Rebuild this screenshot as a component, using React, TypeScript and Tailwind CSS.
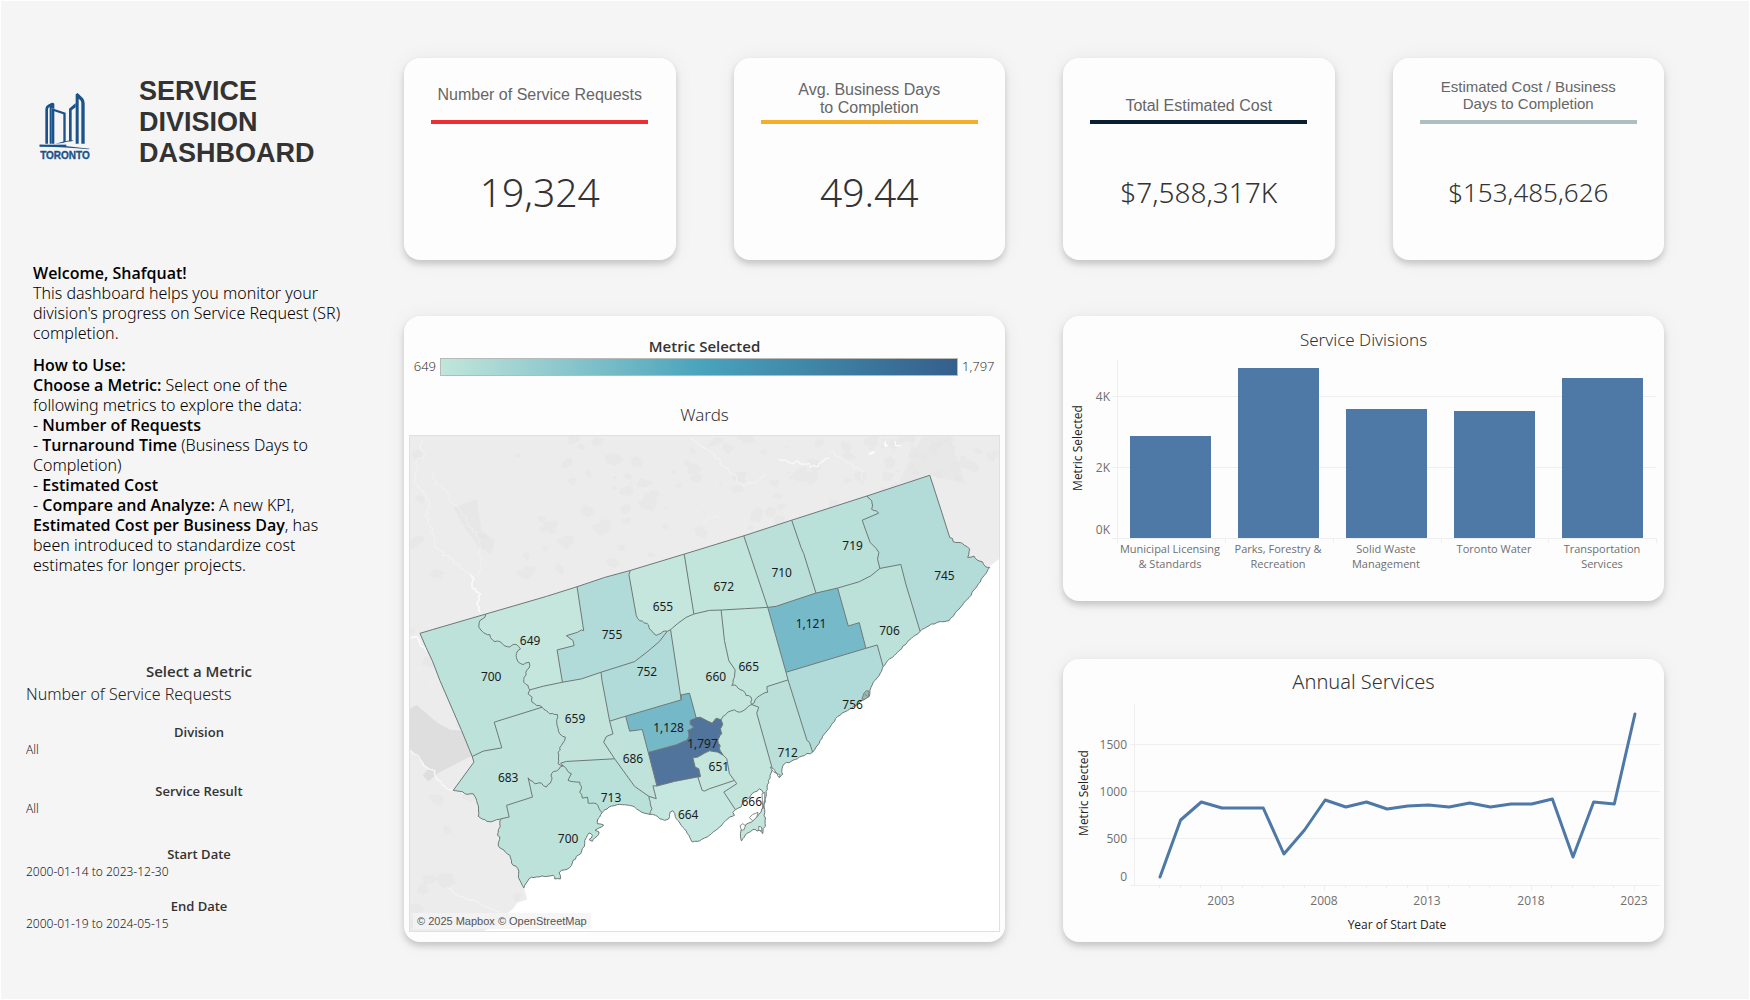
import React from "react";

type Pt = [number, number];

/* ---------- geometry helpers for the ward map ---------- */

const pts = (s: string): Pt[] => s.trim().split(/\s+/).map((p) => p.split(",").map(Number) as Pt);

let seed = 7;
const rand = () => {
  seed = (seed * 16807) % 2147483647;
  return seed / 2147483647;
};

/** Subdivides a line and nudges the new points, for rivers and shorelines. */
const rough = (line: Pt[], amp = 5): Pt[] => {
  const out: Pt[] = [line[0]];
  for (let i = 1; i < line.length; i++) {
    const [x0, y0] = line[i - 1];
    const [x1, y1] = line[i];
    const len = Math.hypot(x1 - x0, y1 - y0) || 1;
    const n = Math.max(1, Math.round(len / 8));
    for (let k = 1; k < n; k++) {
      const t = k / n;
      const off = (rand() - 0.5) * amp;
      out.push([x0 + (x1 - x0) * t - ((y1 - y0) / len) * off, y0 + (y1 - y0) * t + ((x1 - x0) / len) * off]);
    }
    out.push([x1, y1]);
  }
  return out;
};

const rev = (l: Pt[]) => [...l].reverse();
const str = (l: Pt[]) => l.map(([x, y]) => `${Math.round(x)},${Math.round(y)}`).join(" ");

const arc = {
  n1: pts("60,608 97,597 258,550"),
  n2: pts("258,550 440,497 532,468"),
  n3: pts("532,468 615,440 692,419"),
  n4: pts("692,419 854,370"),
  n5: pts("854,370 1033,315"),
  n6: pts("1033,315 1177,268"),
  n7: pts("1177,268 1404,195"),
  n8: pts("1404,195 1592,133"),
  eastEdge: pts("1592,133 1625,235 1652,320"),
  rouge: rough(pts("1652,320 1670,335 1690,338 1705,348 1712,355 1706,380 1725,376 1735,388 1750,393 1760,408 1772,410"), 6),
  coast745: rough(pts("1772,410 1755,435 1735,465 1710,500 1680,535 1650,570 1620,573 1590,585 1563,602"), 4),
  coast706: rough(pts("1563,602 1530,628 1500,660 1480,680 1465,690 1452,708"), 4),
  coast756: rough(pts("1452,708 1440,735 1422,755 1412,780 1410,798 1390,810 1370,825 1345,840 1315,858 1280,905 1250,950 1240,965"), 4),
  coast712: rough(pts("1240,965 1200,980 1175,993 1155,1000 1148,1015 1150,1032 1140,1042 1132,1030 1118,1012"), 4),
  coast666: rough(
    pts(
      "1118,1012 1112,1035 1107,1050 1103,1070 1101,1090 1094,1130 1097,1180 1090,1210 1080,1200 1060,1198 1045,1208 1026,1232 1023,1210 1030,1192 1048,1178 1062,1170 1085,1145 1093,1130 1092,1088 1080,1075 1065,1085 1050,1102 1035,1115 1025,1130 1008,1138"
    ),
    5
  ),
  coast664: rough(
    pts("1008,1138 1000,1146 1005,1155 990,1160 955,1195 930,1215 900,1232 878,1235 868,1215 845,1185 830,1165 826,1150 820,1141 812,1145 808,1165 795,1170 780,1165 768,1155 750,1152"),
    3
  ),
  coast713: rough(pts("750,1152 725,1145 705,1130 690,1125 660,1122 635,1127 615,1138 607,1147"), 3),
  coast700: rough(
    pts(
      "607,1147 595,1165 593,1180 612,1184 598,1193 586,1200 598,1205 592,1218 578,1233 568,1228 578,1215 568,1208 560,1222 555,1240 543,1270 520,1290 510,1312 485,1320 478,1328 482,1346 465,1346 460,1335 410,1340 388,1345 372,1373"
    ),
    5
  ),
  west700: rough(pts("372,1373 360,1350 354,1315 335,1298 330,1275 295,1245 300,1220 293,1215 300,1180 305,1165"), 5),
  west683: rough(pts("305,1165 290,1168 268,1174 235,1158 235,1125 220,1090 200,1092 188,1084 160,1080"), 4),
  west683b: pts("160,1080 222,995 217,978"),
  westEdge: pts("217,978 185,900 120,750 97,690 78,650 60,608"),
  humber1: rough(pts("258,550 255,560 240,570 237,590 250,605 270,612 278,628 300,633 322,648 350,642 362,655 350,668 352,688 370,702 388,695 388,712 378,725 372,755 385,765 390,778"), 6),
  humber2: rough(pts("390,778 385,790 397,800 397,815 427,830"), 6),
  cut683: pts("427,830 283,875 306,952 250,962 217,978"),
  humber3: rough(pts("427,830 450,850 473,852 472,885 480,910 497,920 485,945 475,965 475,1000 490,1006"), 5),
  mimico: rough(pts("490,1006 455,1030 455,1050 440,1070 425,1058 405,1060 385,1042"), 5),
  mimico2: pts("385,1042 398,1100 320,1125 328,1160 305,1165"),
  humber4: rough(pts("490,1006 515,1030 505,1050 540,1055 545,1075 540,1085 548,1103 563,1100 565,1118 590,1120 607,1147"), 5),
  s659: pts("490,1006 483,998 500,993 645,985"),
  b649: pts("532,468 552,600 545,598 533,605 500,615 520,630 523,645 472,658 488,755"),
  h401a: pts("390,778 430,767 488,755"),
  h401b: pts("488,755 545,745 604,725"),
  h401c: pts("604,725 705,693 745,662 780,632 803,602"),
  h401d: pts("803,602 813,597"),
  h401e: pts("813,597 835,578 860,560 883,550"),
  h401f: pts("883,550 930,539 965,538"),
  h401g: pts("965,538 1035,534 1105,530"),
  h401h: pts("1105,530 1130,527 1180,510 1250,487"),
  h401i: pts("1250,487 1315,472"),
  h401j: pts("1315,472 1380,453 1415,435 1442,413"),
  h401k: pts("1442,413 1505,401"),
  don755: [...pts("692,419 688,432 710,555"), ...rough(pts("710,555 720,570 742,578 752,597 770,614 790,603 803,602"), 5)],
  b655: pts("854,370 883,550"),
  b672: pts("1033,315 1105,530"),
  b710: pts("1177,268 1205,350 1213,368 1250,487"),
  b719: [...rough(pts("1404,195 1418,210 1420,222 1417,235 1432,240 1438,247"), 4), ...pts("1389,268 1400,300 1413,335 1430,352 1439,365 1435,385 1442,413")],
  b706: pts("1505,401 1520,460 1563,602"),
  b1121a: pts("1315,472 1347,586 1380,576 1400,653"),
  b1121b: pts("1400,653 1160,725"),
  b1121c: pts("1160,725 1105,530"),
  b706s: pts("1400,653 1434,643 1452,708"),
  b665e: pts("1160,725 1166,748"),
  b712: pts("1166,748 1223,930 1230,935 1240,965"),
  b665s: [...pts("1166,748 1103,768"), ...rough(pts("1103,768 1105,785 1090,790 1080,796 1057,822"), 5)],
  b660: [...pts("965,538 975,630 988,690 1007,718 1005,740"), ...rough(pts("1005,740 997,765 1010,765 1030,780 1040,795 1055,800 1057,822"), 5)],
  b660s: rough(pts("1057,822 1040,835 1020,845 1005,838 985,845 970,858 965,868"), 4),
  b660w: pts("813,597 845,808"),
  b660x: pts("845,808 845,793 870,788 890,862"),
  top1797: pts("890,862 902,860 925,872 938,878 950,863 965,868"),
  b1128: rough(pts("890,862 872,870 872,882 882,890 865,900 868,918 860,930"), 3),
  b1128s: pts("860,930 830,943 746,966"),
  b1128w: pts("746,966 728,897 690,902 678,857"),
  b752s: pts("678,857 845,808"),
  b752t: pts("678,857 630,872"),
  b752w: pts("604,725 607,750 630,872"),
  b686w: pts("630,872 640,910 620,918 612,935 645,985"),
  b713e: pts("645,985 705,1068 748,1098"),
  b686s: pts("748,1098 770,1105 760,1066 772,1067"),
  b686e: pts("772,1067 746,966"),
  b713c: rough(pts("748,1098 757,1135 750,1152"), 4),
  s1797: pts("772,1067 825,1053 903,1038"),
  b651w: pts("903,1038 898,1015 887,1010 880,982 895,980 915,968 930,961 955,965 972,975"),
  e1797: rough(pts("965,868 970,880 963,895 967,910 955,930 962,945 960,955 972,975"), 4),
  b651e: pts("972,975 982,985 990,1030 1005,1050"),
  b651s: pts("1005,1050 930,1075 915,1082 908,1080 895,1040 903,1038"),
  b664e: pts("1005,1050 1012,1060 973,1085 1008,1138"),
  b666e: pts("1057,822 1078,830 1072,848 1118,1012"),
};
type Arc = keyof typeof arc;

/** Joins arcs into a ring; a leading "-" walks the arc backwards. */
const ring = (spec: string): Pt[] =>
  spec.split(" ").flatMap((k) => (k[0] === "-" ? rev(arc[k.slice(1) as Arc]) : arc[k as Arc]));

const wards: { n: string; fill: string; at: Pt; spec: string }[] = [
  { n: "700", fill: "#bce2da", at: [272, 740], spec: "n1 humber1 humber2 cut683 westEdge" },
  { n: "649", fill: "#c4e6dc", at: [389, 632], spec: "n2 b649 -h401a -humber1" },
  { n: "755", fill: "#b1dbd8", at: [635, 614], spec: "n3 don755 -h401c -h401b -b649" },
  { n: "655", fill: "#c4e6dc", at: [788, 530], spec: "n4 b655 -h401e -h401d -don755" },
  { n: "672", fill: "#c1e4db", at: [971, 471], spec: "n5 b672 -h401g -h401f -b655" },
  { n: "710", fill: "#bae0d9", at: [1145, 428], spec: "n6 b710 -h401h -b672" },
  { n: "719", fill: "#b9e0d9", at: [1358, 347], spec: "n7 b719 -h401j -h401i -b710" },
  { n: "745", fill: "#b3dbd8", at: [1634, 437], spec: "n8 eastEdge rouge coast745 -b706 -h401k -b719" },
  { n: "1,121", fill: "#76b9c8", at: [1233, 581], spec: "h401h h401i b1121a b1121b b1121c" },
  { n: "706", fill: "#bbe1d9", at: [1469, 602], spec: "h401j h401k b706 coast706 -b706s -b1121a" },
  { n: "756", fill: "#b1dbd8", at: [1358, 824], spec: "-b1121b b706s coast756 -b712 -b665e" },
  { n: "665", fill: "#c2e5dc", at: [1046, 710], spec: "h401g -b1121c b665e b665s -b660" },
  { n: "660", fill: "#c3e5db", at: [947, 740], spec: "h401e h401f b660 b660s -top1797 -b660x -b660w" },
  { n: "752", fill: "#b1dbd8", at: [740, 725], spec: "h401c h401d b660w -b752s b752t -b752w" },
  { n: "1,128", fill: "#75b9c8", at: [805, 893], spec: "b752s b660x b1128 b1128s b1128w" },
  { n: "1,797", fill: "#50749b", at: [907, 943], spec: "top1797 e1797 -b651w -s1797 b686e -b1128s -b1128" },
  { n: "651", fill: "#c4e6dc", at: [956, 1010], spec: "b651w b651e b651s" },
  { n: "686", fill: "#bfe3da", at: [698, 987], spec: "-b752t -b1128w -b686e -b686s -b713e -b686w" },
  { n: "659", fill: "#c2e4da", at: [524, 866], spec: "h401a h401b b752w b686w -s659 -humber3 -humber2" },
  { n: "683", fill: "#bfe3da", at: [323, 1043], spec: "humber3 mimico mimico2 west683 west683b -cut683" },
  { n: "713", fill: "#bae1d9", at: [632, 1103], spec: "s659 b713e b713c coast713 -humber4" },
  { n: "700", fill: "#bce2da", at: [503, 1226], spec: "humber4 coast700 west700 -mimico2 -mimico" },
  { n: "664", fill: "#c5e7df", at: [864, 1155], spec: "s1797 -b651s b664e coast664 -b713c b686s" },
  { n: "712", fill: "#bae0d9", at: [1163, 968], spec: "-b665s b712 coast712 -b666e" },
  { n: "666", fill: "#c3e5dc", at: [1055, 1115], spec: "-b660s b666e coast666 -b664e -b651e -e1797" },
];

const patches = Array.from({ length: 150 }, () => {
  const x = 30 + rand() * 1770;
  const y = x < 420 ? 15 + rand() * 1488 : 15 + rand() * (560 - x * 0.26);
  const r = 6 + rand() * 26;
  return str(
    [0, 1, 2, 3, 4, 5].map((k) => {
      const a = (k / 6) * 6.283 + rand() * 0.6;
      const q = r * (0.5 + rand() * 0.7);
      return [x + Math.cos(a) * q, y + Math.sin(a) * q * 0.8] as Pt;
    })
  );
});

const rivers: { w: number; o: number; line: Pt[] }[] = [
  { w: 5, o: 0.9, line: rough(pts("212,432 222,445 216,465 228,482 242,490 232,515 242,545"), 8) },
  { w: 2, o: 0.7, line: rough(pts("65,20 58,45 75,70 50,90 40,150 70,180 90,215 80,260 100,310 115,355 150,385 190,415 212,432"), 14) },
  { w: 2, o: 0.6, line: rough(pts("100,120 105,160 145,190 160,220 200,260 210,290 235,320 245,380 240,430 215,440"), 14) },
  { w: 2, o: 0.8, line: rough(pts("870,20 900,40 945,70 970,105 1000,130 1030,165 1075,150 1100,130"), 10) },
  { w: 4, o: 0.9, line: rough(pts("1140,85 1165,92 1200,95 1220,100 1250,108 1272,90 1290,82"), 10) },
  { w: 2, o: 0.7, line: rough(pts("1290,60 1330,85 1370,110 1390,120 1385,150"), 10) },
  { w: 2, o: 0.6, line: rough(pts("910,275 930,262 955,255"), 5) },
  { w: 6, o: 0.9, line: rough(pts("32,622 50,618 60,640 82,662"), 5) },
  { w: 4, o: 0.9, line: rough(pts("32,960 60,985 70,1005 105,1022 110,1045 140,1075 160,1078"), 7) },
  { w: 3, o: 0.6, line: rough(pts("140,1370 165,1392 210,1410 250,1425 300,1445"), 8) },
  { w: 1, o: 0.5, line: rough(pts("40,700 60,720 85,740 95,775"), 10) },
];

const WardMap = () => (
  <svg viewBox="30 15 1770 1488" className="block w-full border border-[#e0e0e0] bg-[#ececec]" role="img" aria-label="Wards map">
    <g fill="#e5e5e5" opacity="0.45">
      {patches.map((p, i) => (
        <polygon key={i} points={p} />
      ))}
    </g>
    <polygon points="1495,160 1570,15 1650,15 1700,160 1592,133" fill="#e4e4e4" opacity="0.45" />
    <polygon points="160,230 230,205 245,300 285,330 275,370 240,350 200,300" fill="#e4e4e4" opacity="0.6" />
    <polygon points="30,835 50,823 110,875 150,898 185,900 217,975 115,1028 85,1053 68,1035 85,1015 30,958" fill="#dedede" />
    <g fill="none" stroke="#fbfbfb" strokeLinejoin="round">
      {rivers.map((r, i) => (
        <polyline key={i} points={str(r.line)} strokeWidth={r.w} opacity={r.o} />
      ))}
    </g>
    <g fill="#fcfcfc">
      <path d="M1407 66l18-6 2 6-16 6zM1455 40l4-15 2 14 7 6-12 3zM1486 30h4v12h14l2 4h-18z" />
    </g>
    <polygon
      points="1800,385 1765,412 1500,500 1250,850 1000,950 800,1100 700,1090 450,1200 372,1360 376,1385 382,1408 352,1418 340,1436 325,1448 332,1462 290,1485 250,1503 1800,1503"
      fill="#fff"
    />
    {wards.map((w, i) => (
      <polygon key={i} points={str(ring(w.spec))} fill={w.fill} />
    ))}
    <g fill="none" stroke="#6c7775" strokeWidth="3" strokeLinejoin="round">
      {Object.entries(arc).map(([k, l]) => (
        <polyline key={k} points={str(l)} />
      ))}
      <g fill="#fff" strokeWidth="2.5">
        <path fill="#9fb5b2" d="M1388 806l6-18 8-8 8 2-3 18-10 6zM1396 790l8 8" />
        <path d="M1112 1010l12 6 6 12-8-4zM1133 1030l8 2 1 8-6-2z" />
        <path d="M1050 1162l10-10 16-6 -4 14-12 12zM1022 1186l8-6 8 6-4 12-8 2zM1078 1188l8 2 2 12-10-2zM1088 1090l8-4 0 20-6 30z" />
      </g>
    </g>
    <g textAnchor="middle" fill="#1b1b1b" fontSize="36" className="font-['Noto_Sans',sans-serif]">
      {wards.map((w, i) => (
        <text key={i} x={w.at[0] + 2} y={w.at[1] + 11}>
          {w.n}
        </text>
      ))}
    </g>
  </svg>
);

/* ---------- charts ---------- */

const divisions = [
  { label: ["Municipal Licensing", "& Standards"], top: 80 },
  { label: ["Parks, Forestry &", "Recreation"], top: 12 },
  { label: ["Solid Waste", "Management"], top: 53 },
  { label: ["Toronto Water"], top: 55 },
  { label: ["Transportation", "Services"], top: 22 },
];

const DivisionChart = () => (
  <svg viewBox="0 0 601 230" className="block w-full font-['Open_Sans',sans-serif]" role="img" aria-label="Service Divisions chart">
    <g stroke="#efefef" shapeRendering="crispEdges">
      <path d="M49 40.5H593M49 111.5H593M49 182.5H593M54.5 4V182" />
      {[54, 162, 270, 378, 485, 593].map((x) => (
        <path key={x} d={`M${x + 0.5} 182v5`} />
      ))}
    </g>
    <g fill="#6f6f6f" fontSize="12" textAnchor="end">
      <text x="47" y="45">4K</text>
      <text x="47" y="116">2K</text>
      <text x="47" y="178">0K</text>
    </g>
    <text transform="translate(19 92) rotate(-90)" textAnchor="middle" fontSize="12" fontWeight="500" fill="#222">
      Metric Selected
    </text>
    {divisions.map((d, i) => (
      <g key={i}>
        <rect x={67 + i * 108} y={d.top} width="81" height={182 - d.top} fill="#4e79a7" />
        {d.label.map((l, k) => (
          <text key={k} x={107 + i * 108} y={197 + k * 15} textAnchor="middle" fontSize="11" fill="#6f6f6f">
            {l}
          </text>
        ))}
      </g>
    ))}
  </svg>
);

const annual = [173, 116, 98, 104, 104, 104, 150, 126, 96, 103, 98, 105, 102, 101, 103, 99, 103, 100, 100, 95, 153, 98, 100, 10];

const AnnualChart = () => (
  <svg viewBox="0 0 601 236" className="block w-full font-['Open_Sans',sans-serif]" role="img" aria-label="Annual Services chart">
    <g stroke="#efefef" shapeRendering="crispEdges">
      <path d="M67 40.5H597M67 87.5H597M67 134.5H597M67 181.5H597M71.5 0V182" />
      {annual.map((_, i) => (
        <path key={i} d={`M${Math.round(96 + i * 20.65) + 0.5} 182v${i % 5 === 3 ? 5 : 2}`} />
      ))}
    </g>
    <g fill="#6f6f6f" fontSize="12" textAnchor="end">
      <text x="64" y="45">1500</text>
      <text x="64" y="92">1000</text>
      <text x="64" y="139">500</text>
      <text x="64" y="177">0</text>
    </g>
    <g fill="#6f6f6f" fontSize="12" textAnchor="middle">
      {[2003, 2008, 2013, 2018, 2023].map((y) => (
        <text key={y} x={Math.round(96 + (y - 2000) * 20.65)} y="201">
          {y}
        </text>
      ))}
    </g>
    <text x="334" y="225" textAnchor="middle" fontSize="12" fontWeight="500" fill="#222">
      Year of Start Date
    </text>
    <text transform="translate(25 89) rotate(-90)" textAnchor="middle" fontSize="12" fontWeight="500" fill="#222">
      Metric Selected
    </text>
    <polyline
      points={annual.map((y, i) => `${97 + i * 20.65},${y}`).join(" ")}
      fill="none"
      stroke="#4e79a7"
      strokeWidth="3"
      strokeLinecap="round"
      strokeLinejoin="round"
    />
  </svg>
);

/* ---------- page parts ---------- */

const Logo = () => (
  <svg viewBox="118 148 156 213" className="mb-[6px] w-[52px] shrink-0" role="img" aria-label="Toronto">
    <g fill="#1b5289">
      <path d="M137 303V200q0-10 8-14l10-5q5-2 9 2v16l-9-3v107h-5V192q-5 3-5 8v103z" />
      <path d="M155 196l43 14v87l-7 2v-84l-27-9v97h-9z" />
      <path d="M208 296V198l20-17v13l-12 9v93z" />
      <path d="M228 303V155l6-4 16 16q5 6 5 14v122h-10V181q0-5-3-8l-5-5v135z" />
      <path d="M167 303q28-9 54-11l-3 3q-18 2-30 6z" />
      <path d="M120 306q76 2 151 12l-5 2q-80-9-146-8z" />
      <path d="M120 306h80v5h-80z" />
    </g>
    <text x="196" y="348" textAnchor="middle" fontSize="30" fontWeight="700" fill="#1b5289" stroke="#1b5289" strokeWidth="1" className="font-['Liberation_Sans',Arial,sans-serif]">
      TORONTO
    </text>
  </svg>
);

const Card = ({ className = "", children }: { className?: string; children: React.ReactNode }) => (
  <section className={`rounded-2xl bg-[#fdfdfd] shadow-[0_4px_6px_rgba(0,0,0,0.17),0_1px_20px_rgba(0,0,0,0.06)] ${className}`}>{children}</section>
);

const Kpi = ({ title, head, rule, value, size }: { title: React.ReactNode; head: string; rule: string; value: string; size: string }) => (
  <Card className="flex min-h-[202px] flex-col items-center">
    <h2 className={`flex h-[62px] items-end justify-center text-center text-[#666] font-['Liberation_Sans',Arial,sans-serif] ${head}`}>
      <span>{title}</span>
    </h2>
    <div className={`h-1 w-4/5 ${rule}`} />
    <p className={`mt-10 font-light leading-[56px] text-[#333] font-['Noto_Sans',sans-serif] ${size}`}>{value}</p>
  </Card>
);

const B = ({ children }: { children: React.ReactNode }) => <strong className="font-semibold font-['Open_Sans',sans-serif]">{children}</strong>;

const Filter = ({ id, label, options, big = false }: { id: string; label: string; options: string[]; big?: boolean }) => (
  <div>
    <label htmlFor={id} className={`block pr-1 text-center font-semibold text-[#333] ${big ? "text-[15px] leading-6" : "text-[13px] leading-[18px]"}`}>
      {label}
    </label>
    <select
      id={id}
      className={`block w-full appearance-none bg-transparent font-light text-[#222] outline-none font-['Noto_Sans',sans-serif] ${big ? "h-[22px] text-base leading-[22px]" : "h-[18px] text-xs leading-[18px]"}`}
    >
      {options.map((o) => (
        <option key={o}>{o}</option>
      ))}
    </select>
  </div>
);

export default function App() {
  return (
    <div className="flex min-h-screen border border-white bg-[#f5f5f5] font-['Open_Sans',sans-serif]">
      <aside className="flex w-[403px] shrink-0 flex-col">
        <header className="mt-[75px] flex items-end pl-[38px]">
          <Logo />
          <h1 className="ml-12 w-52 text-[27px] font-bold leading-[31px] text-[#333] font-['Liberation_Sans',Arial,sans-serif]">SERVICE DIVISION DASHBOARD</h1>
        </header>

        <div className="ml-8 mt-[94px] w-[340px] text-base leading-5 text-black font-['Noto_Sans',sans-serif]">
          <p>
            <B>Welcome, Shafquat!</B>
            <br />
            <span className="font-light">
              This dashboard helps you monitor your
              <br />
              division's progress on Service Request (SR)
              <br />
              completion.
            </span>
          </p>
          <p className="mt-3 font-light">
            <B>How to Use:</B>
            <br />
            <B>Choose a Metric:</B> Select one of the
            <br />
            following metrics to explore the data:
            <br />- <B>Number of Requests</B>
            <br />- <B>Turnaround Time</B> (Business Days to
            <br />
            Completion)
            <br />- <B>Estimated Cost</B>
            <br />- <B>Compare and Analyze:</B> A new KPI,
            <br />
            <B>Estimated Cost per Business Day</B>, has
            <br />
            been introduced to standardize cost
            <br />
            estimates for longer projects.
          </p>
        </div>

        <form className="ml-[25px] mr-7 mt-[84px]">
          <Filter big id="metric" label="Select a Metric" options={["Number of Service Requests", "Turnaround Time", "Estimated Cost"]} />
          <div className="mt-[18px]">
            <Filter id="division" label="Division" options={["All"]} />
          </div>
          <div className="mt-[23px]">
            <Filter id="result" label="Service Result" options={["All"]} />
          </div>
          <div className="mt-[27px]">
            <Filter id="start" label="Start Date" options={["2000-01-14 to 2023-12-30"]} />
          </div>
          <div className="mt-4">
            <Filter id="end" label="End Date" options={["2000-01-19 to 2024-05-15"]} />
          </div>
        </form>
      </aside>

      <main className="min-w-0 flex-1 pb-14 pr-[85px] pt-[57px]">
        <div className="grid grid-cols-4 gap-x-[58px] gap-y-14">
          <Kpi title="Number of Service Requests" head="pb-4 text-base leading-[18px]" rule="bg-[#f02d33]" value="19,324" size="text-[39px]" />
          <Kpi
            title={
              <>
                Avg. Business Days
                <br />
                to Completion
              </>
            }
            head="pb-[3px] text-base leading-[18px]"
            rule="bg-[#f5ae27]"
            value="49.44"
            size="text-[39px]"
          />
          <Kpi title="Total Estimated Cost" head="pb-[5px] text-base leading-[18px]" rule="bg-[#0b1f33]" value="$7,588,317K" size="text-[28px]" />
          <Kpi
            title={
              <>
                Estimated Cost / Business
                <br />
                Days to Completion
              </>
            }
            head="pb-2 text-[15px] leading-[17px]"
            rule="bg-[#adbfc1]"
            value="$153,485,626"
            size="text-[26px]"
          />

          <Card className="col-span-2 px-[5px] pb-[10px] pt-5">
            <h2 className="text-center text-[15px] font-semibold leading-5 text-[#333]">Metric Selected</h2>
            <div className="mt-[2px] flex h-[18px] items-center justify-center gap-1 px-1 text-[13px] font-light text-[#222]">
              <span className="w-[23px] text-right">649</span>
              <span className="h-full flex-1 border border-[#b5bcb8] bg-linear-to-r from-[#c1e6db] via-[#49a4bc] to-[#345f8c]" />
              <span className="w-[34px] text-left">1,797</span>
            </div>
            <h3 className="mt-[27px] text-center text-[17px] font-light leading-6 text-[#333] font-['Noto_Sans',sans-serif]">Wards</h3>
            <div className="relative mt-2">
              <WardMap />
              <p className="absolute bottom-[3px] left-1 bg-[#f4f4f4]/80 px-1 text-[11px] leading-4 text-[#555] font-['Liberation_Sans',Arial,sans-serif]">
                <a href="#mapbox">© 2025 Mapbox</a> <a href="#osm">© OpenStreetMap</a>
              </p>
            </div>
          </Card>

          <div className="col-span-2 flex flex-col gap-[58px]">
            <Card className="flex-1 pt-3">
              <h2 className="text-center text-[17px] font-light leading-6 text-[#333] font-['Noto_Sans',sans-serif]">Service Divisions</h2>
              <div className="mt-1">
                <DivisionChart />
              </div>
            </Card>
            <Card className="flex-1 pt-[11px]">
              <h2 className="text-center text-xl font-light leading-6 text-[#333] font-['Noto_Sans',sans-serif]">Annual Services</h2>
              <div className="mt-[10px]">
                <AnnualChart />
              </div>
            </Card>
          </div>
        </div>
      </main>
    </div>
  );
}
